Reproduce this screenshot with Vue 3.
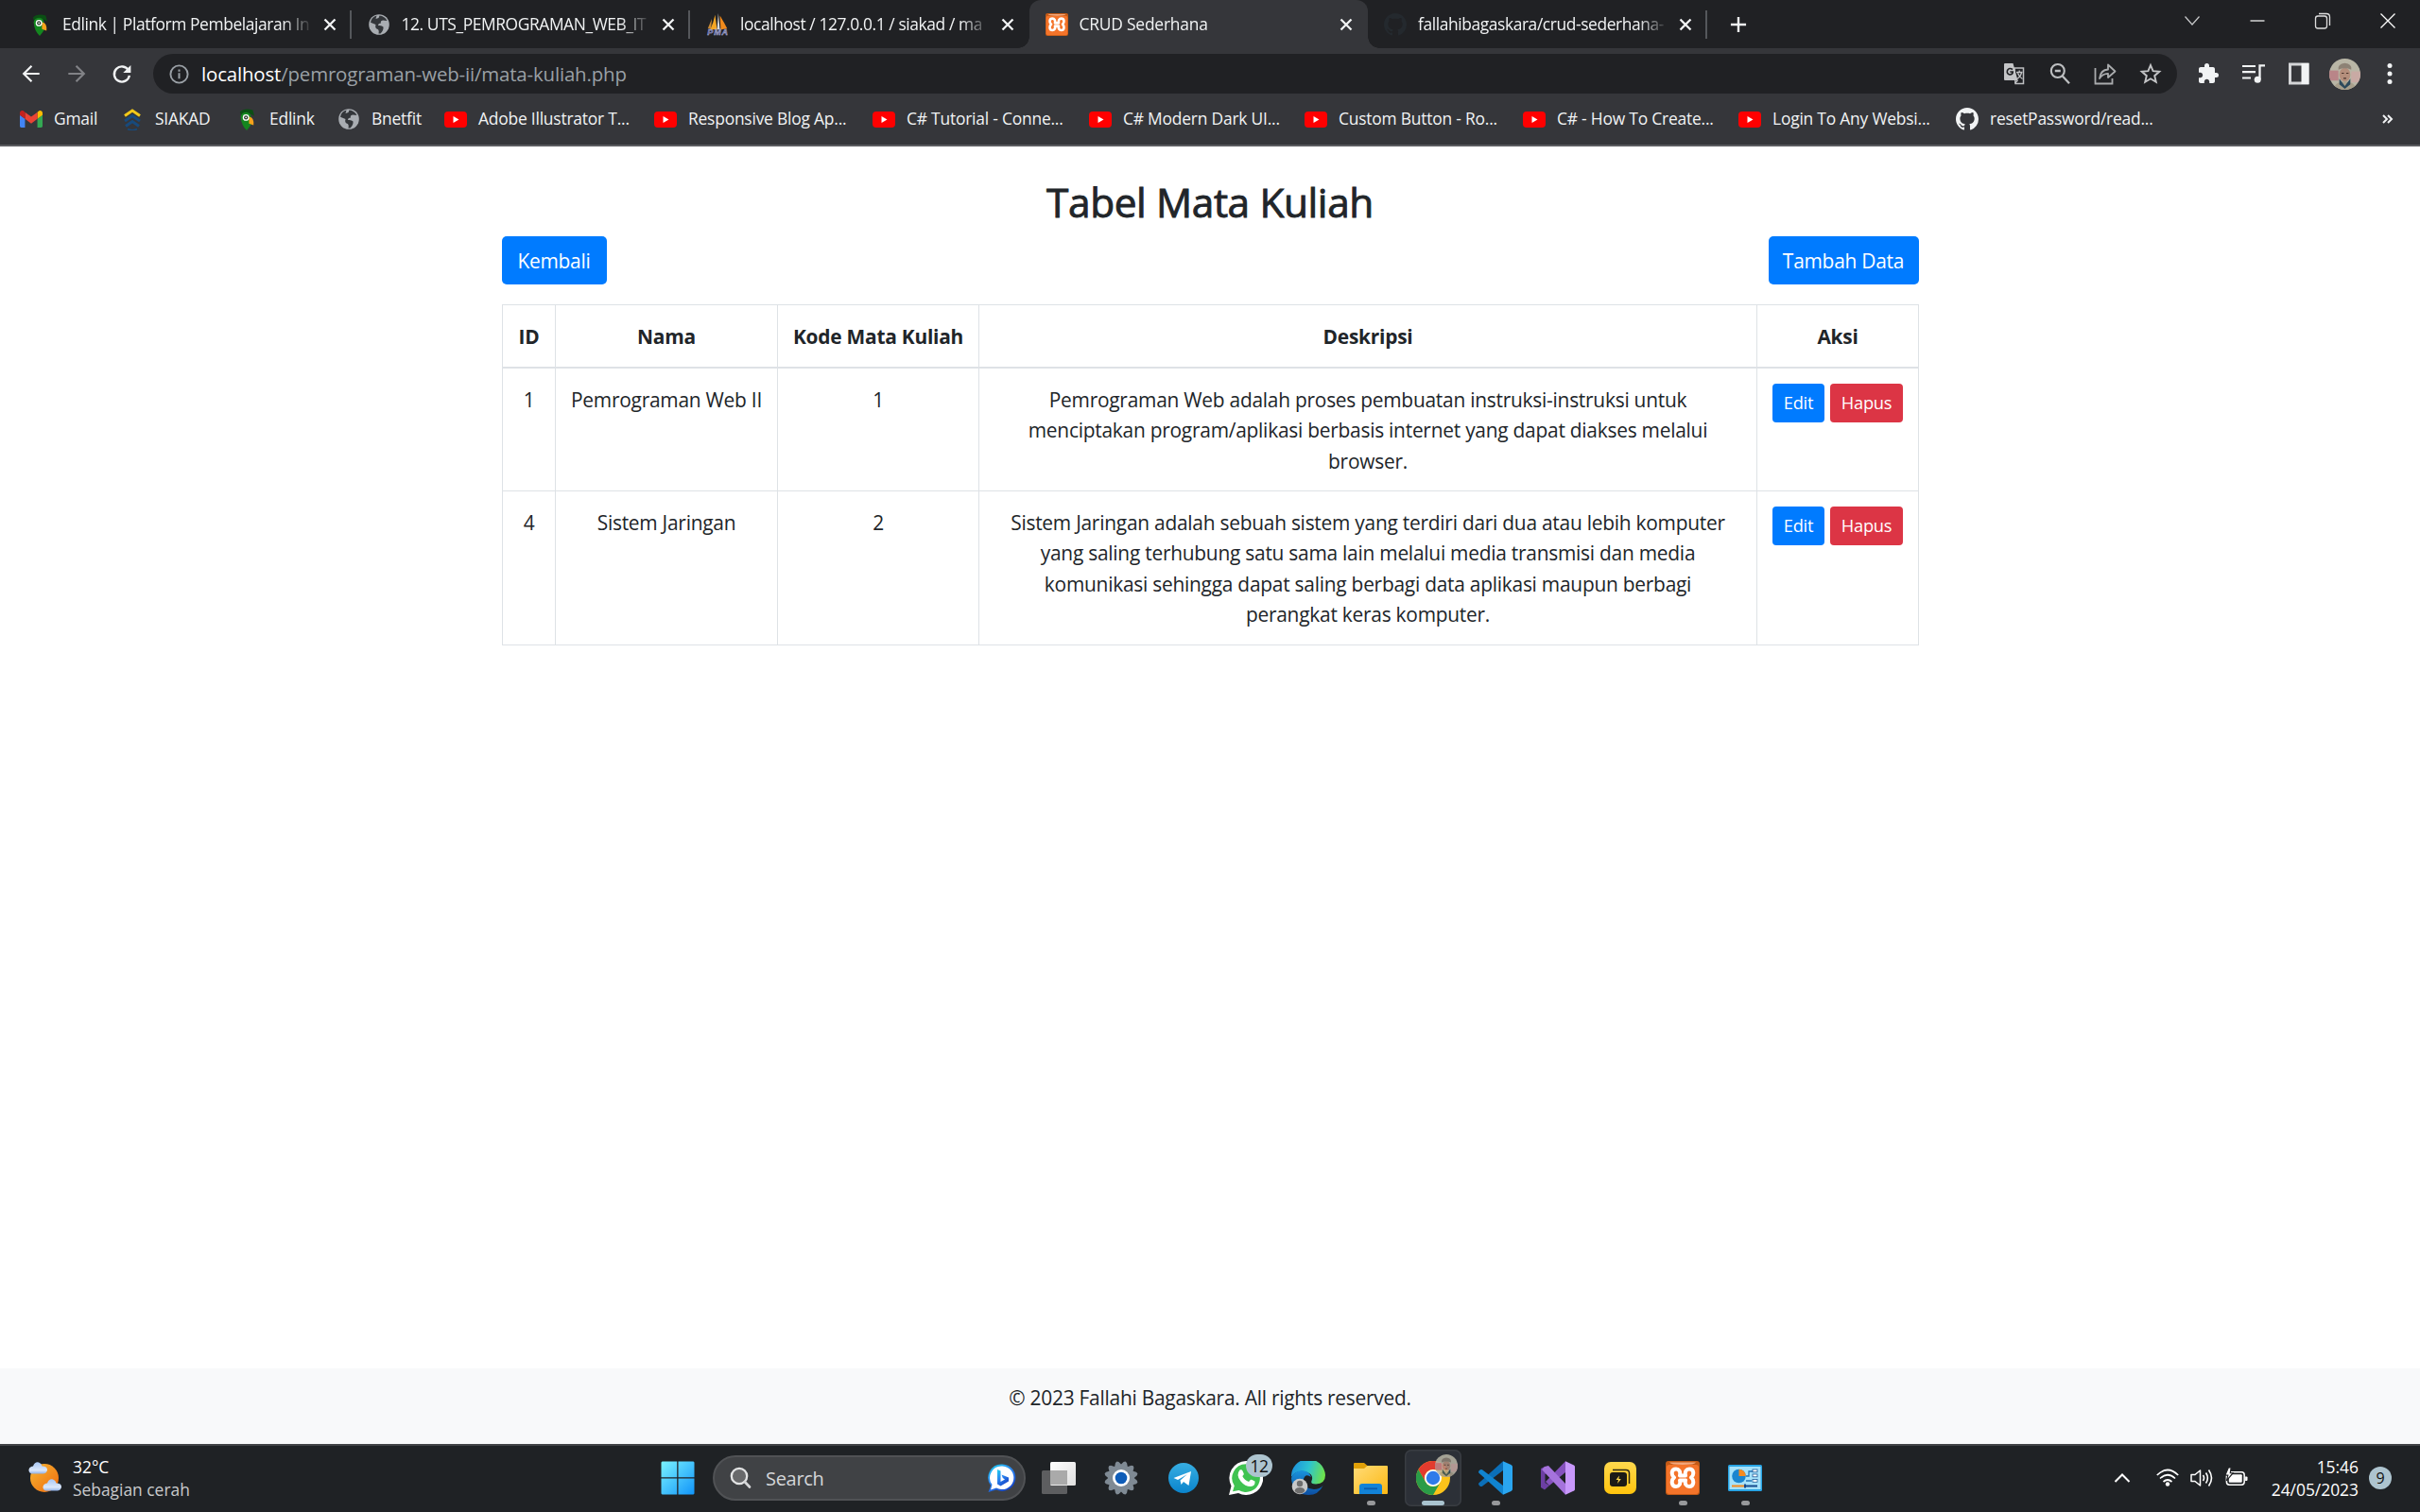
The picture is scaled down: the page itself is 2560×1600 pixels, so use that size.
<script setup>
import { h } from 'vue'

const art = {
  parrot: ['0 0 24 30', '<path d="M3 6 Q8 0 20 3 L22 11 Q13 4 5 11Z" fill="#0b4f14"/><path d="M4 12 Q5 6 12 6 Q18 7 18 14 V22 Q15 27 12 30 Q5 24 4 12Z" fill="#14861f"/><path d="M15 12 Q22 13 21 23 L15 21Z" fill="#f6a21b"/><circle cx="11" cy="13" r="4.3" fill="#fff"/><circle cx="11" cy="13" r="2.6" fill="#2a3b2a"/><circle cx="11" cy="13" r="1" fill="#fff"/>'],
  globe: ['0 0 24 24', '<circle cx="12" cy="12" r="10.800" fill="#a9adb2"/><path d="M12.500 2.500 Q18 3 20.500 8 L16 7.500 Q13 8 14 10.500 Q11 10.500 11 13 Q15 12.500 16.500 14.500 Q17 18 13.500 21.500 L11.500 21.500 Q12.500 17 9.500 16.500 Q7.500 15 8.500 12 L3 9.800 Q4 4 9.500 2.600 L8.500 6 L11.500 5Z" fill="#33363a"/>'],
  pma: ['0 0 28 28', '<path d="M11 2 L13.500 20 L5 20 Q9 12 11 2Z" fill="#f5a623"/><path d="M15 0 L17 20 L13.500 20Z" fill="#d9d9d9"/><path d="M17 3 Q22 11 26 19 L18 20Z" fill="#f08a1c"/><path d="M7 7 L6 19 L2 19Z" fill="#c98a35"/><text x="14" y="27" text-anchor="middle" textLength="25" font-family="Liberation Sans" font-size="10.500" font-weight="bold" font-style="italic" fill="#5a5f9e" stroke="#c9cbe6" stroke-width=".4">PMA</text>'],
  xampp: ['0 0 36 36', '<rect width="36" height="36" rx="3" fill="#c35a16"/><rect x="1" y="4" width="34" height="31" rx="3" fill="#f4742a"/><path d="M4 1.500 H32 Q31 4 18 4 Q5 4 4 1.500Z" fill="#f3a77c"/><path d="M15 15.500 H21 C20 11 22 8.500 25 8.500 C30 8.500 30.500 14.500 27 17.500 C30.500 20.500 30 27 25 27 C22 27 20 24.500 21 20.500 H15 C16 24.500 14 27 11 27 C6 27 5.500 20.500 9 17.500 C5.500 14.500 6 8.500 11 8.500 C14 8.500 16 11 15 15.500Z" fill="none" stroke="#fff" stroke-width="4" stroke-linejoin="round"/>'],
  github: ['0 0 16 16', '<path fill="currentColor" d="M8 0C3.580 0 0 3.580 0 8c0 3.540 2.290 6.530 5.470 7.590.4.070.55-.17.55-.38 0-.19-.01-.82-.01-1.490-2.010.37-2.530-.49-2.690-.94-.09-.23-.48-.94-.82-1.130-.28-.15-.68-.52-.01-.53.63-.01 1.080.58 1.230.82.72 1.210 1.870.87 2.330.66.07-.52.28-.87.51-1.070-1.780-.2-3.640-.89-3.640-3.950 0-.87.31-1.590.82-2.150-.08-.2-.36-1.020.08-2.120 0 0 .67-.21 2.200.82.64-.18 1.320-.27 2-.27s1.360.09 2 .27c1.530-1.040 2.200-.82 2.200-.82.44 1.100.16 1.920.08 2.120.51.56.82 1.270.82 2.150 0 3.070-1.870 3.750-3.650 3.950.29.25.54.73.54 1.480 0 1.070-.01 1.930-.01 2.200 0 .21.15.46.55.38A8.010 8.010 0 0 0 16 8c0-4.420-3.580-8-8-8z"/>'],
  gmail: ['52 42 88 66', '<path fill="#4285f4" d="M58 108h14V74L52 59v43c0 3.320 2.690 6 6 6"/><path fill="#34a853" d="M120 108h14c3.320 0 6-2.690 6-6V59l-20 15"/><path fill="#fbbc04" d="M120 48v26l20-15v-8c0-7.420-8.470-11.650-14.400-7.200"/><path fill="#ea4335" d="M72 74V48l24 18 24-18v26L96 92"/><path fill="#c5221f" d="M52 51v8l20 15V48l-5.600-4.200c-5.940-4.450-14.400-.22-14.400 7.200"/>'],
  siakad: ['0 0 24 24', '<g fill="none" stroke-width="3"><path d="M4 8.500 L12 3 L20 8.500" stroke="#f2c919"/><path d="M4 14 L12 8.500 L20 14" stroke="#174a7c"/><path d="M5 19.500 L12 14.500 L19 19.500" stroke="#174a7c"/><path d="M7 22.500 Q12 25 17 22.500" stroke="#174a7c" stroke-width="1.500"/></g>'],
  yt: ['0 0 24 24', '<rect y="4" width="24" height="17" rx="4" fill="#f00"/><path d="M9.500 9 L15.500 12.500 L9.500 16Z" fill="#fff"/>'],
  close: ['0 0 24 24', '<path d="M6.500 6.500 L17.500 17.500 M17.500 6.500 L6.500 17.500" stroke="currentColor" stroke-width="2.300"/>'],
  plus: ['0 0 24 24', '<path d="M12 3.200 V20.800 M3.200 12 H20.800" stroke="currentColor" stroke-width="2.600"/>'],
  chevDown: ['0 0 24 24', '<path d="M4.500 7.500 L12 16 L19.500 7.500" fill="none" stroke="#c8c9cb" stroke-width="1.200"/>'],
  min: ['0 0 24 24', '<path d="M4.500 12 H19.500" stroke="#fff" stroke-width="1.200"/>'],
  restore: ['0 0 24 24', '<rect x="4.500" y="7" width="12" height="13" rx="2.500" fill="none" stroke="#ddd" stroke-width="1.300"/><path d="M8 4.500 H16 Q19.500 4.500 19.500 8 V17" fill="none" stroke="#ddd" stroke-width="1.300"/>'],
  winClose: ['0 0 24 24', '<path d="M4.500 4.500 L19.500 19.500 M19.500 4.500 L4.500 19.500" stroke="#fff" stroke-width="1.300"/>'],
  back: ['0 0 24 24', '<path d="M21.500 12 H3.500 M12.500 3 L3.500 12 L12.500 21" fill="none" stroke="#f1f3f4" stroke-width="2.400"/>'],
  fwd: ['0 0 24 24', '<path d="M2.500 12 H20.500 M11.500 3 L20.500 12 L11.500 21" fill="none" stroke="#818286" stroke-width="2.400"/>'],
  reload: ['0 0 24 24', '<path d="M19.600 8.200 A8.800 8.800 0 1 0 20.600 14" fill="none" stroke="#f1f3f4" stroke-width="2.600"/><path d="M22.200 2.200 V11 H13.400Z" fill="#f1f3f4"/>'],
  info: ['0 0 24 24', '<circle cx="12" cy="12" r="10.400" fill="none" stroke="#9aa0a6" stroke-width="2.200"/><path d="M12 10.500 V17.500 M12 6.300 V8.800" stroke="#9aa0a6" stroke-width="2.300"/>'],
  translate: ['0 0 24 24', '<path d="M12 6 H21.500 V22.500 H13Z" fill="none" stroke="#bdbfc1" stroke-width="1.500"/><path d="M2 1 H10.500 L15.500 19 H2 Q1 19 1 18 V2 Q1 1 2 1Z" fill="#c4c5c7"/><path d="M10 7.500 Q6.500 5 4.500 8.500 Q3.500 12 7 13 Q10.300 12.800 10.300 10 H7.300" fill="none" stroke="#202124" stroke-width="1.600"/><path d="M14 10.500 H20.500 M17.200 8.500 V10.500 M19.500 11 Q18 16 14.500 17.500 M15.500 11.500 Q17 15.500 20.500 17.500 M12.500 22 L15.500 19" fill="none" stroke="#c4c5c7" stroke-width="1.300"/>'],
  zoom: ['0 0 24 24', '<circle cx="9.800" cy="9" r="7" fill="none" stroke="#bdbfc1" stroke-width="2.100"/><path d="M6.800 9 H12.800 M14.800 14.500 L22 22.200" stroke="#bdbfc1" stroke-width="2.300"/>'],
  share: ['0 0 24 24', '<path d="M1.500 6 V22.500 H19.500 V17" fill="none" stroke="#a9abad" stroke-width="1.800"/><path d="M6 17 Q7 8 15 7.500 V2.500 L22.500 9.500 L15 16 V11.800 Q9 12 6 17Z" fill="none" stroke="#a9abad" stroke-width="1.800" stroke-linejoin="round"/>'],
  star: ['0 0 24 24', '<path d="M12 3 L14.600 9.200 L21.300 9.800 L16.200 14.200 L17.800 20.800 L12 17.300 L6.200 20.800 L7.800 14.200 L2.700 9.800 L9.400 9.200Z" fill="none" stroke="#c4c5c7" stroke-width="1.900"/>'],
  puzzle: ['0 0 24 24', '<path fill="#f1f3f4" d="M20.500 11H19V7c0-1.100-.9-2-2-2h-4V3.500a2.500 2.500 0 0 0-5 0V5H4c-1.100 0-1.990.9-1.990 2v3.800H3.500c1.490 0 2.700 1.210 2.700 2.700s-1.210 2.700-2.700 2.700H2V20c0 1.100.9 2 2 2h3.800v-1.500c0-1.490 1.210-2.700 2.700-2.700s2.700 1.210 2.700 2.700V22H17c1.100 0 2-.9 2-2v-4h1.500a2.500 2.500 0 0 0 0-5z"/>'],
  music: ['0 0 24 24', '<path d="M0 4 H14 M0 10.200 H14 M0 16.500 H9" stroke="#f1f3f4" stroke-width="2.200"/><path d="M18.500 18 V3.300 H24" fill="none" stroke="#f1f3f4" stroke-width="2.300"/><circle cx="16.200" cy="18.200" r="3.500" fill="#f1f3f4"/>'],
  panel: ['0 0 24 24', '<rect x="2.500" y="2" width="18.500" height="20" fill="none" stroke="#d4d5d7" stroke-width="3"/><rect x="14.500" y="1" width="8" height="22" fill="#f1f3f4"/>'],
  face: ['0 0 34 34', '<defs><clipPath id="fc"><circle cx="17" cy="17" r="17"/></clipPath></defs><g clip-path="url(#fc)"><rect width="34" height="34" fill="#b9b6a6"/><rect y="13" width="10" height="11" fill="#b98588"/><rect x="24" y="14" width="10" height="12" fill="#c9aaa4"/><path d="M4 34 Q6 25 17 25 Q28 25 30 34Z" fill="#a89f8b"/><path d="M11 22 L17 30 L23 22 V28 L17 33 L11 28Z" fill="#2d4a5c"/><ellipse cx="17" cy="17.500" rx="6" ry="7.500" fill="#b58f7c"/><path d="M10 12 Q9 6 17 5 Q25 6 24 12 Q17 9 10 12Z" fill="#8d8275"/><path d="M13.500 16 h2.500 M18.500 16 h2.500 M15.500 21.500 h3" stroke="#4a342c" stroke-width="1.200"/></g>'],
  dots: ['0 0 24 24', '<g fill="#f1f3f4"><circle cx="12" cy="3.500" r="2.500"/><circle cx="12" cy="12" r="2.500"/><circle cx="12" cy="20.500" r="2.500"/></g>'],
  more: ['0 0 24 24', '<path d="M7 8 L11 12 L7 16 M12 8 L16 12 L12 16" fill="none" stroke="#f1f3f4" stroke-width="2"/>'],
  weather: ['0 0 36 34', '<defs><linearGradient id="sun" x1="0" y1="0" x2="1" y2="1"><stop offset="0" stop-color="#f7b733"/><stop offset="1" stop-color="#ee6a0d"/></linearGradient><linearGradient id="cl" x1="0" y1="0" x2="0" y2="1"><stop offset="0" stop-color="#a9c8f5"/><stop offset=".7" stop-color="#dce8fb"/><stop offset="1" stop-color="#8fb0e6"/></linearGradient></defs><circle cx="18" cy="18" r="15" fill="url(#sun)"/><path id="cloud" d="M4 13.500 A4 4 0 0 1 4 6 Q5 5.500 6 5.500 Q8 .5 12 1.500 Q15 2.500 15.500 5.500 Q21 5.500 21 9.500 Q20.500 13 17 13.500Z" fill="url(#cl)"/><use href="#cloud" x="15" y="18"/>'],
  win: ['0 0 36 36', '<defs><linearGradient id="wg" x1="0" y1="0" x2="1" y2="1" gradientUnits="objectBoundingBox"><stop offset="0" stop-color="#7af3ff"/><stop offset="1" stop-color="#1194f9"/></linearGradient></defs><path d="M1.500 .5 H17.200 V17.200 H.5 V1.500Z M18.500 .5 H34.500 L35.500 1.500 V17.200 H18.500Z M.5 18.500 H17.200 V35.500 H1.500 L.5 34.500Z M18.500 18.500 H35.500 V34.500 L34.500 35.500 H18.500Z" fill="url(#wg)"/>'],
  search: ['0 0 24 24', '<circle cx="11" cy="10" r="8.200" fill="#68696b" stroke="#e2e3e4" stroke-width="2.300"/><path d="M16.800 16 L22 21.500" stroke="#d5d6d8" stroke-width="2.700" stroke-linecap="round"/>'],
  bing: ['0 0 30 30', '<defs><linearGradient id="bg" x1="0" y1="0" x2=".6" y2="1"><stop offset="0" stop-color="#1ed1ee"/><stop offset=".5" stop-color="#2b86f0"/><stop offset="1" stop-color="#1746c8"/></linearGradient></defs><path d="M15.500 .5 A14.200 14.200 0 1 1 9 27.500 L.5 30 L3 23 A14.200 14.200 0 0 1 15.500 .5Z" fill="url(#bg)"/><path d="M15.500 2.500 A12.300 12.300 0 1 1 9 25.500 L3 27.500 L4.500 22 A12.300 12.300 0 0 1 15.500 2.500Z" fill="#fff"/><path d="M10 6 L13.500 7.500 V19 L18 16.500 L15.800 15 L14.500 11.500 L22 14.500 V18.500 L13.500 23.500 L10 21.500Z" fill="url(#bg)"/>'],
  tasks: ['0 0 36 36', '<defs><linearGradient id="tw" x1="0" y1="0" x2="1" y2="1"><stop offset="0" stop-color="#fff"/><stop offset="1" stop-color="#dedede"/></linearGradient></defs><rect x="0" y="10" width="27" height="25" rx="1.500" fill="#5d5e60"/><rect x="9" y="1" width="27" height="25" rx="1.500" fill="url(#tw)"/><rect x="9" y="10" width="18" height="15" fill="#aaa"/>'],
  gear: ['0 0 36 36', '<g fill="#7f8a94"><circle cx="18" cy="18" r="13.500"/><path id="th" d="M12 2 L13.500 .5 L15.500 1 L18 3.500 L20.500 1 L22.500 .5 L24 2 L25.500 9 H10.500Z"/><use href="#th" transform="rotate(60 18 18)"/><use href="#th" transform="rotate(120 18 18)"/><use href="#th" transform="rotate(180 18 18)"/><use href="#th" transform="rotate(240 18 18)"/><use href="#th" transform="rotate(300 18 18)"/></g><circle cx="18" cy="18" r="9" fill="#fff"/><circle cx="18" cy="18" r="6.300" fill="#0f5db8"/>'],
  telegram: ['0 0 36 36', '<defs><linearGradient id="tg" x1="0" y1="0" x2="0" y2="1"><stop offset="0" stop-color="#37aee2"/><stop offset="1" stop-color="#0a84cc"/></linearGradient></defs><circle cx="18" cy="18" r="16" fill="url(#tg)"/><path d="M7.500 18 L26 11 L23.500 26 L18 22 L15.500 25 L14.500 20.500 L22 14 L12 20Z" fill="#fff"/>'],
  whatsapp: ['0 0 36 36', '<path d="M18 0 A18 18 0 1 1 10 34 L0 36 L2.500 26.500 A18 18 0 0 1 18 0Z" fill="#fff"/><path d="M18 3.200 A14.900 14.900 0 1 1 10.500 31 L4 32.200 L5.800 26.300 A14.900 14.900 0 0 1 18 3.200Z" fill="#3fc351"/><path d="M11.500 9.500 Q13.500 8.500 14.500 10.500 L15.800 13.500 Q16 14.500 14.300 16 Q16.500 20.500 21 22 L22.800 20 Q23.500 19.500 24.500 20 L27.500 21.500 Q28 26.500 23 27 Q17 27 12.500 21.500 Q7 15 11.500 9.500Z" fill="#fff"/>'],
  edge: ['0 0 36 36', '<defs><linearGradient id="e1" x1="0" y1=".3" x2="1" y2=".5"><stop offset="0" stop-color="#1c90de"/><stop offset=".5" stop-color="#2dc3d0"/><stop offset="1" stop-color="#6ee24a"/></linearGradient><linearGradient id="e2" x1="0" y1="0" x2="0" y2="1"><stop offset="0" stop-color="#1a93dd"/><stop offset="1" stop-color="#0c4fa3"/></linearGradient></defs><path d="M0 17 A18 18 0 0 1 36 15 Q36 24 26 24.500 Q20 24.500 21.500 21 Q24 15 17 12 Q6 8 0 17Z" fill="url(#e1)"/><path d="M0 18 Q3 10.500 11 10 Q19 10.500 21 17 Q15 12.500 13 19 Q12 29 24 30 Q30 30 33.500 26 Q29 36 18 36 Q1 35 0 18Z" fill="url(#e2)"/><circle cx="9" cy="27" r="8.300" fill="#c9c9c9"/><circle cx="9" cy="24" r="3.200" fill="#6f6f6f"/><path d="M3.500 32 Q4 28 9 28 Q14 28 14.500 32 Q9 37 3.500 32Z" fill="#6f6f6f"/>'],
  folder: ['0 0 36 36', '<defs><linearGradient id="fg" x1="0" y1="0" x2="1" y2="1"><stop offset="0" stop-color="#ffdc78"/><stop offset="1" stop-color="#fcb813"/></linearGradient></defs><path d="M0 3 Q0 2 1 2 H11 L14.500 5 H35 V12 H0Z" fill="#e0a008"/><path d="M0 8 H11 L14.500 5 H35 Q36 5 36 6 V34 Q36 35 35 35 H1 Q0 35 0 34Z" fill="url(#fg)"/><path d="M6 35 V27 Q6 24 9 24 H27 Q30 24 30 27 V35Z" fill="#1283d8"/><path d="M11 29.300 H25" stroke="#0b5cad" stroke-width="1.800"/>'],
  chrome: ['0 0 36 36', '<circle cx="18" cy="18" r="18" fill="#fcc31a"/><path d="M18 9 H33.600 A18 18 0 0 0 2.400 9 L10.200 22.500 A9 9 0 0 1 18 9Z" fill="#e33b2e"/><path d="M2.400 9 A18 18 0 0 0 18 36 L25.800 22.500 A9 9 0 0 1 10.200 22.500Z" fill="#2a9c48"/><circle cx="18" cy="18" r="9" fill="#fff"/><circle cx="18" cy="18" r="7.200" fill="#2f7bea"/>'],
  vscode: ['0 0 36 36', '<path d="M26 .2 L26 10 L4 26.800 Q2.500 27.500 1.200 26.200 L.5 25.500 Q-.5 24 .8 23Z" fill="#0b6fb8"/><path d="M26 35.800 L26 26 L4 9.200 Q2.500 8.500 1.200 9.800 L.5 10.500 Q-.5 12 .8 13Z" fill="#1084d0"/><path d="M26 .2 L34.500 4 Q36 5 36 6 V30 Q36 31 34.500 32 L26 35.800Z" fill="#2aa6f0"/>'],
  vs: ['0 0 36 36', '<path d="M0 8 L4 6 L9 11 L4.500 14 V23 L9 26 L4 30.500 L0 28Z" fill="#6c3fa3"/><path d="M9 26 L26 12 V.2 L5 22Z" fill="#8551bd"/><path d="M4 6 L8 5 L26 24 V35.800 L1 9Z" fill="#a573dc"/><path d="M26 .2 L35 4.500 Q36 5 36 6 V30 Q36 31 35 31.500 L26 35.800Z" fill="#c898fb"/>'],
  flash: ['0 0 36 36', '<defs><linearGradient id="yg" x1="0" y1="0" x2="0" y2="1"><stop offset="0" stop-color="#ffd84d"/><stop offset="1" stop-color="#ffc40d"/></linearGradient></defs><rect x="1" y="1" width="34" height="34" rx="7" fill="url(#yg)"/><rect x="7" y="12" width="18" height="15" rx="3" fill="#1b1a16"/><path d="M10 9.500 H24 Q27.500 9.500 27.500 13 V24" fill="none" stroke="#2a2613" stroke-width="1.500"/><path d="M17 15.500 L13.500 20 H16 L15 24 L18.800 18.900 H16.300Z" fill="#ffd84d"/>'],
  control: ['0 0 36 36', '<rect y="4" width="36" height="28" rx="1.500" fill="#28a4e4"/><rect x="1.500" y="6" width="33" height="24" fill="#a6e2fa"/><circle cx="11.500" cy="16" r="7.300" fill="#1b86cf"/><path d="M11.500 16 V8.700 A7.300 7.300 0 0 1 18.800 16Z" fill="#f58b1f"/><path d="M19 16 H22 V11 H26 M19 21 H25" fill="none" stroke="#2474b5" stroke-width="1.300"/><g fill="#fff" stroke="#1d5b99" stroke-width=".8"><rect x="26" y="9" width="5" height="2.800"/><rect x="26" y="14" width="5" height="2.800"/><rect x="26" y="19.500" width="5" height="2.800"/></g><path d="M4 26.500 H18" stroke="#f58b1f" stroke-width="2"/><path d="M18 26.500 H31 M18 24.500 V28.500" stroke="#174a8c" stroke-width="2"/>'],
  chevUp: ['0 0 24 24', '<path d="M4.500 16 L12 8.500 L19.500 16" fill="none" stroke="#fff" stroke-width="2"/>'],
  wifi: ['0 0 24 24', '<g fill="none" stroke="#fff" stroke-width="1.700"><path d="M.8 9 Q12 -2 23.200 9"/><path d="M4 12.500 Q12 5 20 12.500"/><path d="M7.500 16 Q12 12 16.500 16"/></g><circle cx="12" cy="18.500" r="2.200" fill="#fff"/>'],
  sound: ['0 0 24 24', '<path d="M1 8.500 H5 L10.500 4 V20 L5 15.500 H1Z" fill="none" stroke="#fff" stroke-width="1.500" stroke-linejoin="round"/><path d="M13.500 9 Q15.500 12 13.500 15 M16.500 6.500 Q20.200 12 16.500 17.500 M19.500 3.500 Q25.500 12 19.500 20.500" fill="none" stroke="#fff" stroke-width="1.600"/>'],
  battery: ['0 0 26 24', '<rect x="2.500" y="5" width="19.500" height="14" rx="3" fill="none" stroke="#fff" stroke-width="1.600"/><rect x="5" y="7.500" width="14.500" height="9" rx="1" fill="#fff"/><path d="M23 10 h1.500 q1 0 1 1 v2.500 q0 1 -1 1 h-1.500z" fill="#fff"/><path d="M4.500 0 L1 8.500 H4 L2.500 14.500 L9.500 6 H6.500 L7.500 0Z" fill="#fff" stroke="#202225" stroke-width="1.200"/>'],
}

const Ico = ({ n, s = 24 }) =>
  h('svg', { viewBox: art[n][0], width: s, height: s, innerHTML: art[n][1], style: { flex: 'none', display: 'block' } })
Ico.props = ['n', 's']

const tabs = [
  { icon: 'parrot', title: 'Edlink | Platform Pembelajaran In' },
  { icon: 'globe', title: '12. UTS_PEMROGRAMAN_WEB_IT' },
  { icon: 'pma', title: 'localhost / 127.0.0.1 / siakad / ma' },
  { icon: 'xampp', title: 'CRUD Sederhana', active: true },
  { icon: 'github', title: 'fallahibagaskara/crud-sederhana-' },
]

const bookmarks = [
  { icon: 'gmail', t: 'Gmail', w: 107 },
  { icon: 'siakad', t: 'SIAKAD', w: 121 },
  { icon: 'parrot', t: 'Edlink', w: 108 },
  { icon: 'globe', t: 'Bnetfit', w: 113 },
  { icon: 'yt', t: 'Adobe Illustrator T...', w: 222 },
  { icon: 'yt', t: 'Responsive Blog Ap...', w: 231 },
  { icon: 'yt', t: 'C# Tutorial - Conne...', w: 229 },
  { icon: 'yt', t: 'C# Modern Dark UI...', w: 228 },
  { icon: 'yt', t: 'Custom Button - Ro...', w: 231 },
  { icon: 'yt', t: 'C# - How To Create...', w: 228 },
  { icon: 'yt', t: 'Login To Any Websi...', w: 230 },
  { icon: 'github', t: 'resetPassword/read...', w: 230 },
]

const rows = [
  {
    id: 1, nama: 'Pemrograman Web II', kode: 1,
    desk: [
      'Pemrograman Web adalah proses pembuatan instruksi-instruksi untuk',
      'menciptakan program/aplikasi berbasis internet yang dapat diakses melalui',
      'browser.',
    ],
  },
  {
    id: 4, nama: 'Sistem Jaringan', kode: 2,
    desk: [
      'Sistem Jaringan adalah sebuah sistem yang terdiri dari dua atau lebih komputer',
      'yang saling terhubung satu sama lain melalui media transmisi dan media',
      'komunikasi sehingga dapat saling berbagi data aplikasi maupun berbagi',
      'perangkat keras komputer.',
    ],
  },
]

const apps = [
  { icon: 'tasks' },
  { icon: 'gear' },
  { icon: 'telegram' },
  { icon: 'whatsapp', badge: '12' },
  { icon: 'edge' },
  { icon: 'folder', run: true },
  { icon: 'chrome', active: true },
  { icon: 'vscode', run: true },
  { icon: 'vs' },
  { icon: 'flash' },
  { icon: 'xampp', run: true },
  { icon: 'control', run: true },
]
</script>

<template>
  <div class="screen">
    <header class="tabbar">
      <div v-for="t in tabs" :key="t.title" class="tab" :class="{ active: t.active }">
        <span class="tab-ico" :class="t.icon"><Ico :n="t.icon" :s="24" /></span>
        <span class="tab-title">{{ t.title }}</span>
        <Ico n="close" :s="24" />
      </div>
      <div class="newtab"><Ico n="plus" :s="22" /></div>
      <div class="winctl">
        <Ico n="chevDown" /><Ico n="min" /><Ico n="restore" /><Ico n="winClose" />
      </div>
    </header>

    <div class="toolbar">
      <div class="nav"><Ico n="back" :s="22" /><Ico n="fwd" :s="22" /><Ico n="reload" :s="22" /></div>
      <div class="omnibox">
        <Ico n="info" :s="21" />
        <span class="url"><b>localhost</b>/pemrograman-web-ii/mata-kuliah.php</span>
        <div class="omni-icons"><Ico n="translate" /><Ico n="zoom" /><Ico n="share" /><Ico n="star" /></div>
      </div>
      <div class="ext">
        <Ico n="puzzle" /><Ico n="music" /><Ico n="panel" />
        <Ico n="face" :s="33" />
        <Ico n="dots" />
      </div>
    </div>

    <nav class="bookmarks">
      <div v-for="b in bookmarks" :key="b.t" class="bm" :style="{ width: b.w + 'px' }">
        <Ico :n="b.icon" :s="24" /><span>{{ b.t }}</span>
      </div>
      <span class="bm-more"><Ico n="more" /></span>
    </nav>

    <main class="page">
      <div class="container">
        <h2>Tabel Mata Kuliah</h2>
        <div class="actions">
          <a class="btn">Kembali</a>
          <a class="btn tambah">Tambah Data</a>
        </div>
        <table>
          <colgroup><col class="c1"><col class="c2"><col class="c3"><col class="c4"><col class="c5"></colgroup>
          <thead>
            <tr><th>ID</th><th>Nama</th><th>Kode Mata Kuliah</th><th>Deskripsi</th><th>Aksi</th></tr>
          </thead>
          <tbody>
            <tr v-for="r in rows" :key="r.id">
              <td>{{ r.id }}</td>
              <td>{{ r.nama }}</td>
              <td>{{ r.kode }}</td>
              <td><div v-for="l in r.desk" :key="l">{{ l }}</div></td>
              <td><div class="row-btns"><a class="sm edit">Edit</a><a class="sm hapus">Hapus</a></div></td>
            </tr>
          </tbody>
        </table>
      </div>
      <footer>© 2023 Fallahi Bagaskara. All rights reserved.</footer>
    </main>

    <div class="taskbar">
      <div class="weather">
        <Ico n="weather" :s="36" />
        <div><div class="temp">32°C</div><div class="cond">Sebagian cerah</div></div>
      </div>
      <div class="start"><Ico n="win" :s="36" /></div>
      <div class="search"><Ico n="search" :s="24" /><span>Search</span><Ico n="bing" :s="30" /></div>
      <div class="apps">
        <div v-for="a in apps" :key="a.icon" class="app" :class="{ on: a.active, run: a.run }">
          <Ico :n="a.icon" :s="36" />
          <span v-if="a.badge" class="badge">{{ a.badge }}</span>
          <span v-if="a.active" class="who"><Ico n="face" :s="24" /></span>
        </div>
      </div>
      <div class="tray">
        <Ico n="chevUp" :s="24" /><Ico n="wifi" :s="24" /><Ico n="sound" :s="24" /><Ico n="battery" :s="25" />
      </div>
      <div class="clock"><div>15:46</div><div>24/05/2023</div></div>
      <div class="count">9</div>
    </div>
  </div>
</template>

<style>
body { margin: 0; overflow: hidden; }
</style>

<style scoped>
* { box-sizing: border-box; }
.screen {
  width: 2560px; height: 1600px; display: flex; flex-direction: column; overflow: hidden;
  font-family: "Open Sans", "Noto Sans", sans-serif; white-space: nowrap; background: #fff;
}
.tabbar { height: 51px; flex: none; background: #202124; display: flex; padding-left: 13px; color: #f1f3f4; }
.tab { width: 358.5px; height: 51px; display: flex; align-items: center; padding: 0 11px 0 17px; position: relative; font-size: 17.4px; letter-spacing: -.4px; }
.tab-ico { width: 24px; height: 24px; margin-right: 12px; flex: none; }
.tab-ico.github { color: #24292e; }
.tab-title { flex: 1; overflow: hidden; margin-right: 6px; padding-bottom: 1px; -webkit-mask-image: linear-gradient(90deg, #000 calc(100% - 32px), transparent); }
.tab.active .tab-title { letter-spacing: -.2px; }
.tab::after { content: ""; position: absolute; right: 0; top: 11px; width: 2px; height: 30px; background: #55575b; }
.tab.active { background: #35363a; border-radius: 12px 12px 0 0; }
.tab.active::after, .tab.active::before {
  content: ""; position: absolute; top: auto; bottom: 0; width: 12px; height: 12px;
}
.tab.active::after { right: -12px; background: radial-gradient(circle at 100% 0, transparent 11.5px, #35363a 12px); }
.tab.active::before { left: -12px; background: radial-gradient(circle at 0 0, transparent 11.5px, #35363a 12px); }
.tab:nth-child(3)::after { display: none; }
.newtab { margin-left: 22px; display: flex; align-items: center; }
.winctl { margin-left: auto; display: flex; gap: 45px; padding: 9.500px 22px 0 0; }

.toolbar { height: 55px; flex: none; background: #35363a; display: flex; align-items: center; padding-bottom: 1px; }
.nav { width: 162px; flex: none; padding-left: 22px; display: flex; gap: 26px; }
.omnibox { width: 2141px; flex: none; height: 42px; border-radius: 21px; background: #202124; display: flex; align-items: center; padding: 0 16px 0 17px; }
.url { margin-left: 13px; font-size: 20.4px; color: #9aa0a6; letter-spacing: -.14px; padding-bottom: 1px; }
.url b { font-weight: 400; color: #fff; }
.omni-icons { margin-left: auto; display: flex; gap: 24px; }
.ext { display: flex; align-items: center; margin-left: 21px; }
.ext > * { margin-right: 24px; }
.ext > :nth-child(3) { margin-right: 20px; }
.ext > :nth-child(4) { margin-right: 19px; }
.ext > :last-child { margin-right: 0; }

.bookmarks { height: 49px; flex: none; background: #35363a; border-bottom: 2px solid #5b5c60; display: flex; align-items: center; padding: 0 0 8px 21px; font-size: 17.4px; letter-spacing: -.2px; color: #f1f3f4; }
.bm { display: flex; align-items: center; gap: 12px; flex: none; }
.bm span { padding-bottom: 2px; }
.bm-more { margin-left: auto; margin-right: 22px; }

.page { flex: 1; display: flex; flex-direction: column; color: #212529; font-size: 20.9px; letter-spacing: -.24px; line-height: 32.4px; }
.container { width: 1499px; margin: 0 auto; padding-top: 33px; flex: 1; }
h2 { margin: 0 0 10px; font-size: 42.4px; line-height: 52px; font-weight: 400; -webkit-text-stroke: .9px #212529; text-align: center; letter-spacing: -.4px; }
.actions { display: flex; justify-content: space-between; margin-bottom: 21px; }
.btn { width: 111px; height: 51px; border-radius: 5px; background: #007bff; color: #fff; display: flex; align-items: center; justify-content: center; padding-top: 1px; }
.btn.tambah { width: 159px; }
table { width: 1499px; table-layout: fixed; border-collapse: collapse; text-align: center; }
.c1 { width: 56px; } .c2 { width: 235px; } .c3 { width: 213px; } .c4 { width: 823px; } .c5 { width: 171px; }
th, td { border: 1px solid #dee2e6; padding: 17px 0 14.9px 1px; vertical-align: top; }
th { font-weight: 700; border-bottom-width: 2px; padding: 16.5px 0 16px 1px; }
.row-btns { display: flex; justify-content: center; gap: 6px; margin-top: -1px; }
.sm { height: 41px; border-radius: 4px; color: #fff; font-size: 18.3px; display: flex; align-items: center; justify-content: center; }
.edit { width: 55px; background: #007bff; }
.hapus { width: 77px; background: #dc3545; }
footer { height: 80px; background: #f8f9fa; text-align: center; padding-top: 15px; }

.taskbar { height: 72px; flex: none; background: #1f2225; border-top: 2px solid #414346; display: flex; align-items: center; color: #fff; padding-bottom: 2px; }
.weather { width: 699px; padding-left: 29px; display: flex; align-items: center; gap: 12px; font-size: 17.4px; line-height: 24px; }
.weather > svg { margin-top: -3px; }
.weather > div { margin-top: -1px; }
.cond { color: #c9cacc; }
.start { width: 55px; }
.search { width: 331px; height: 48px; border-radius: 24px; background: #404245; border: 2px solid #505255; display: flex; align-items: center; padding: 0 8px 0 15px; font-size: 20px; letter-spacing: -.3px; color: #d5d6d8; }
.search span { flex: 1; margin-left: 15px; }
.apps { display: flex; margin-left: 5px; gap: 6px; }
.app { width: 60px; height: 60px; display: flex; align-items: center; justify-content: center; position: relative; }
.app.on { background: #2c3037; box-shadow: inset 0 0 0 1.500px #393d42; border-radius: 7px; }
.app.run::after, .app.on::after { content: ""; position: absolute; bottom: 1px; width: 9px; height: 5px; border-radius: 3px; background: #97999b; }
.app.on::after { width: 24px; background: #a9c3cf; }
.badge { position: absolute; left: 30px; top: 5px; width: 28px; height: 24px; border-radius: 12px; background: #adc4cf; color: #111; font-size: 17.5px; line-height: 24px; text-align: center; letter-spacing: -.5px; }
.who { position: absolute; left: 32px; top: 5px; opacity: .85; }
.tray { margin-left: auto; display: flex; align-items: center; gap: 12px; }
.tray > :first-child { margin-right: 12px; }
.clock { width: 117px; text-align: right; font-size: 17.4px; line-height: 24px; margin-top: -1px; }
.count { width: 24px; height: 24px; border-radius: 50%; background: #adc4cf; color: #111; margin: 0 30px 0 11px; text-align: center; font-size: 16px; line-height: 24px; }
</style>
